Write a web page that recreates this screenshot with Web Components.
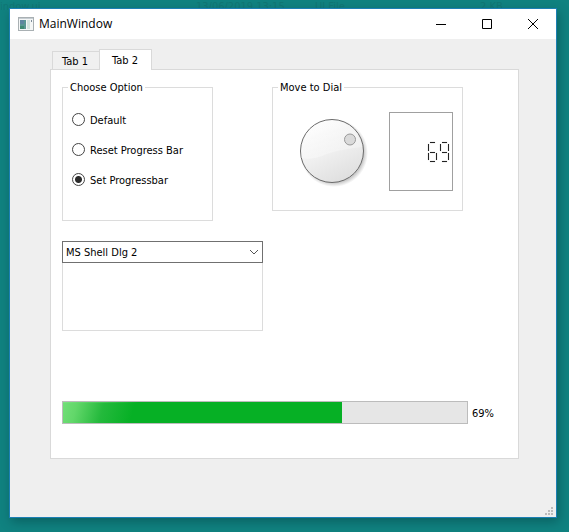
<!DOCTYPE html>
<html lang="en">
<head>
<meta charset="utf-8">
<title>MainWindow</title>
<style>
  html { height: 100%; }
  body {
    margin: 0; min-height: 100%; box-sizing: border-box; display: flex; position: relative;
    padding: 8px 12px 14px 9px;
    background: #108280;
    font: 11px/16px "DejaVu Sans Condensed", "Noto Sans", sans-serif;
    color: #000;
  }
</style>
</head>
<body>
<desktop-row></desktop-row>
<app-window heading="MainWindow">
  <tab-panel>
    <group-box slot="options" legend="Choose Option">
      <radio-option value="default">Default</radio-option>
      <radio-option value="reset">Reset Progress Bar</radio-option>
      <radio-option value="set" checked>Set Progressbar</radio-option>
    </group-box>
    <group-box slot="dial" legend="Move to Dial">
      <dial-meter value="69"></dial-meter>
    </group-box>
    <font-picker slot="font"></font-picker>
    <progress-meter slot="progress" value="69"></progress-meter>
  </tab-panel>
</app-window>

<script>
class Base extends HTMLElement {
  constructor() {
    super();
    this.attachShadow({ mode: "open" }).innerHTML =
      `<style>*{box-sizing:border-box}</style>` + this.markup();
  }
}

/* File listing that lies dimmed behind the window. */
customElements.define("desktop-row", class extends Base {
  markup() {
    return `<style>
      :host { position: absolute; inset: 0 0 auto 0; overflow: hidden; display: grid;
        grid-template-columns: 196fr 119fr 165fr 89fr; color: #107775; white-space: nowrap; line-height: 14px; }
    </style>
    <span>indow.ui</span><span>13/06/2019 13:15</span><span>UI File</span><span>2 KB</span>`;
  }
});

customElements.define("app-window", class extends Base {
  markup() {
    return `<style>
      :host { flex: 1; display: flex; flex-direction: column; position: relative;
        background: #efefef; border: 1px solid #1c7fb4;
        box-shadow: 2px 4px 10px rgba(0,50,55,.4); }
      header { height: 30px; background: #fff; display: flex; align-items: center; padding-left: 8px; }
      h1 { flex: 1; margin: 0 0 0 5px; font: 12px/16px "Open Sans", "Noto Sans", sans-serif; }
      button { width: 46px; height: 30px; padding: 0; border: 0; background: none; display: grid; place-items: center; }
      svg { display: block; }
      main { flex: 1; display: flex; padding: 10px 37px 58px 40px; }
      .grip { position: absolute; right: 2px; bottom: 1px; }
    </style>
    <header>
      <svg width="16" height="14" viewBox="0 0 16 14" aria-hidden="true">
        <rect x=".5" y=".5" width="15" height="13" fill="#f4f6f6" stroke="#a9b0b3"/>
        <path d="M1 1.500h14" stroke="#c6cdd2"/>
        <rect x="2" y="3" width="6" height="9" fill="#5b9793"/>
        <path d="M2 3h4v4H2z" fill="#5f86a0"/>
        <path d="M2 9h4v3H2z" fill="#3f8a72"/>
        <rect x="9" y="3" width="3" height="9" fill="#d3e3dd"/>
        <rect x="13" y="3" width="1" height="2" fill="#7d8c99"/>
      </svg>
      <h1></h1>
      <button aria-label="Minimize"><svg width="10" height="10"><path d="M0 5.500h10" stroke="#000"/></svg></button>
      <button aria-label="Maximize"><svg width="10" height="10"><path d="M.5 .5h9v9h-9z" fill="none" stroke="#000"/></svg></button>
      <button aria-label="Close"><svg width="10" height="10"><path d="M0 0L10 10M10 0L0 10" stroke="#000"/></svg></button>
    </header>
    <main><slot></slot></main>
    <svg class="grip" width="9" height="9" fill="#bcbcbc" aria-hidden="true">
      <path d="M6 0h2v2h-2zM3 3h2v2h-2zM6 3h2v2h-2zM0 6h2v2h-2zM3 6h2v2h-2zM6 6h2v2h-2z"/>
    </svg>`;
  }
  connectedCallback() { this.shadowRoot.querySelector("h1").textContent = this.getAttribute("heading"); }
});

customElements.define("tab-panel", class extends Base {
  markup() {
    return `<style>
      :host { flex: 1; display: flex; flex-direction: column; }
      .tabs { display: flex; align-items: flex-end; padding-left: 2px; }
      button { font: inherit; color: inherit; border: 1px solid #d9d9d9; border-bottom: 0; background: #f0f0f0;
        height: 18px; width: 48px; padding: 2px 2px 0 0; }
      button[aria-selected=true] { background: #fff; height: 21px; width: 53px; margin: 0 0 -1px -1px; padding: 1px 1px 0 0; z-index: 1; }
      .page { flex: 1; background: #fff; border: 1px solid #d9d9d9; padding: 9px 22px 34px 11px;
        display: grid; grid-template-columns: 151fr 50fr 9fr 191fr 33fr;
        grid-template-rows: 142px auto 1fr; row-gap: 20px; align-items: start; }
      [name=dial]::slotted(*) { grid-column: 4; }
      [name=font]::slotted(*) { grid-column: 1 / 3; grid-row: 2; }
      [name=progress]::slotted(*) { grid-column: 1 / -1; grid-row: 3; align-self: end; }
    </style>
    <div class="tabs" role="tablist">
      <button role="tab" aria-selected="false">Tab 1</button>
      <button role="tab" aria-selected="true">Tab 2</button>
    </div>
    <div class="page" role="tabpanel" aria-label="Tab 2">
      <slot name="options"></slot><slot name="dial"></slot><slot name="font"></slot><slot name="progress"></slot>
    </div>`;
  }
});

customElements.define("group-box", class extends Base {
  markup() {
    return `<style>
      :host { display: block; }
      fieldset { margin: 0; min-width: 0; border: 1px solid #dcdcdc; padding: 9px 5px 26px; }
      legend { padding: 2px 2px 0; line-height: 14px; }
    </style>
    <fieldset><legend></legend><slot></slot></fieldset>`;
  }
  connectedCallback() { this.shadowRoot.querySelector("legend").textContent = this.getAttribute("legend"); }
});

customElements.define("radio-option", class extends Base {
  markup() {
    return `<style>
      :host { display: block; padding-left: 4px; }
      label { display: flex; align-items: center; gap: 5px; height: 30px; }
      span { padding-top: 3px; }
      input { appearance: none; width: 13px; height: 13px; margin: 0; border: 1px solid #444; border-radius: 50%; background: #fff; }
      input:checked { background: radial-gradient(circle, #2c2c2c 3px, #fff 4px); }
    </style>
    <label><input type="radio" name="option"><span><slot></slot></span></label>`;
  }
  connectedCallback() {
    const input = this.shadowRoot.querySelector("input");
    input.checked = this.hasAttribute("checked");
    input.addEventListener("change", () => {
      for (const other of this.parentElement.querySelectorAll("radio-option"))
        if (other !== this) other.shadowRoot.querySelector("input").checked = false;
    });
  }
});

/* Seven-segment read-out: each digit lights the segments named in its code. */
const SEGMENTS = ["abcdef", "bc", "abged", "abgcd", "fgbc", "afgcd", "afgedc", "abc", "abcdefg", "abcdfg"];
customElements.define("lcd-number", class extends Base {
  static observedAttributes = ["value"];
  markup() {
    return `<style>
      :host { display: block; }
      output { height: 100%; display: flex; justify-content: flex-end; align-items: center; gap: 3px;
        padding-right: 3px; border: 1px solid #a0a0a0; }
      .digit { display: grid; width: 9px; height: 20px; grid-template: 2px 7px 2px 7px 2px / 2px 1fr 2px; }
      i { background: #222; box-shadow: 0 0 1px #888; }
      .a { grid-area: 1/2; height: 1px; } .g { grid-area: 3/2; } .d { grid-area: 5/2; height: 1px; margin-top: 1px; }
      .f { grid-area: 2/1; } .e { grid-area: 4/1; }
      .b { grid-area: 2/3; } .c { grid-area: 4/3; }
      .b, .c, .e, .f { width: 1px; }
      .b, .c { margin-left: 1px; }
      .g { height: 1px; margin-top: 1px; }
    </style><output></output>`;
  }
  attributeChangedCallback(name, old, value) {
    const out = this.shadowRoot.querySelector("output");
    out.setAttribute("aria-label", value);
    out.innerHTML = [...value].map(d =>
      `<span class="digit">${[...SEGMENTS[d]].map(s => `<i class="${s}"></i>`).join("")}</span>`).join("");
  }
});

customElements.define("dial-meter", class extends Base {
  markup() {
    return `<style>
      :host { display: flex; justify-content: space-between; padding: 8px 4px 0 22px; margin-bottom: -7px; }
      .dial { display: grid; width: 68px; height: 68px; margin-top: 7px; }
      .dial > * { grid-area: 1/1; }
      input { appearance: none; margin: 0; width: 66px; height: 66px; background: none; border-radius: 50%; }
      input::-webkit-slider-thumb { appearance: none; width: 12px; height: 12px; }
      lcd-number { width: 64px; height: 79px; }
    </style>
    <div class="dial">
      <svg width="68" height="68" viewBox="0 0 68 68" aria-hidden="true">
        <defs>
          <linearGradient id="face" x1=".2" y1="0" x2=".7" y2="1"><stop offset="0" stop-color="#fff"/><stop offset=".5" stop-color="#f0f0f0"/><stop offset="1" stop-color="#dedede"/></linearGradient>
          <linearGradient id="gloss" x1="0" y1="0" x2="0" y2="1"><stop offset="0" stop-color="#fff" stop-opacity=".1"/><stop offset="1" stop-color="#fff" stop-opacity=".35"/></linearGradient>
          <radialGradient id="shade"><stop offset=".88" stop-color="#999" stop-opacity=".5"/><stop offset="1" stop-color="#aaa" stop-opacity="0"/></radialGradient>
        </defs>
        <circle cx="34" cy="34" r="34" fill="url(#shade)"/>
        <circle cx="32" cy="32" r="31.500" fill="url(#face)" stroke="#6b6b6b"/>
        <path d="M1.500 39A31 31 0 0 1 62.500 28Q34 31 22 37Q12 41 1.500 39z" fill="url(#gloss)"/>
        <circle cx="50" cy="20.500" r="5.500" fill="#dadada" stroke="#999"/>
      </svg>
      <input type="range" min="0" max="100" aria-label="Dial">
    </div>
    <lcd-number></lcd-number>`;
  }
  connectedCallback() {
    const input = this.shadowRoot.querySelector("input"), lcd = this.shadowRoot.querySelector("lcd-number");
    input.value = this.getAttribute("value");
    lcd.setAttribute("value", input.value);
    input.addEventListener("input", () => lcd.setAttribute("value", input.value));
  }
});

customElements.define("font-picker", class extends Base {
  markup() {
    return `<style>
      :host { display: block; }
      .field { display: grid; align-items: center; }
      .field > * { grid-area: 1/1; }
      select { appearance: none; width: 100%; height: 22px; margin: 0; padding: 2px 20px 0 3px; border: 1px solid #707070; border-radius: 0; background: #fff; font: inherit; color: inherit; }
      svg { justify-self: end; margin-right: 4px; pointer-events: none; }
      textarea { display: block; width: 100%; height: 68px; margin: 0; border: 1px solid #dcdcdc; border-top: 0; resize: none; font: inherit; }
    </style>
    <div class="field">
      <select aria-label="Font"><option>MS Shell Dlg 2</option></select>
      <svg width="10" height="6" aria-hidden="true"><path d="M1 1l4 4l4-4" fill="none" stroke="#555"/></svg>
    </div>
    <textarea aria-label="Preview"></textarea>`;
  }
});

customElements.define("progress-meter", class extends Base {
  markup() {
    return `<style>
      :host { display: flex; align-items: center; gap: 4px; }
      progress { appearance: none; flex: 1; min-width: 0; height: 23px; border: 1px solid #bcbcbc; background: #e6e6e6; }
      progress::-webkit-progress-bar { background: #e6e6e6; }
      progress::-webkit-progress-value { background:
        linear-gradient(90deg, #7fe383, #06b025 75px) 0 0 / 100% 1px no-repeat,
        linear-gradient(105deg, #72df78 0, #62d76a 14px, #24b93c 40px, #06b025 70px); }
      label { width: 24px; padding-top: 2px; white-space: nowrap; }
    </style>
    <progress id="bar" max="100"></progress><label for="bar"></label>`;
  }
  connectedCallback() {
    const v = this.getAttribute("value");
    this.shadowRoot.querySelector("progress").value = v;
    this.shadowRoot.querySelector("label").textContent = v + "%";
  }
});
</script>
</body>
</html>
